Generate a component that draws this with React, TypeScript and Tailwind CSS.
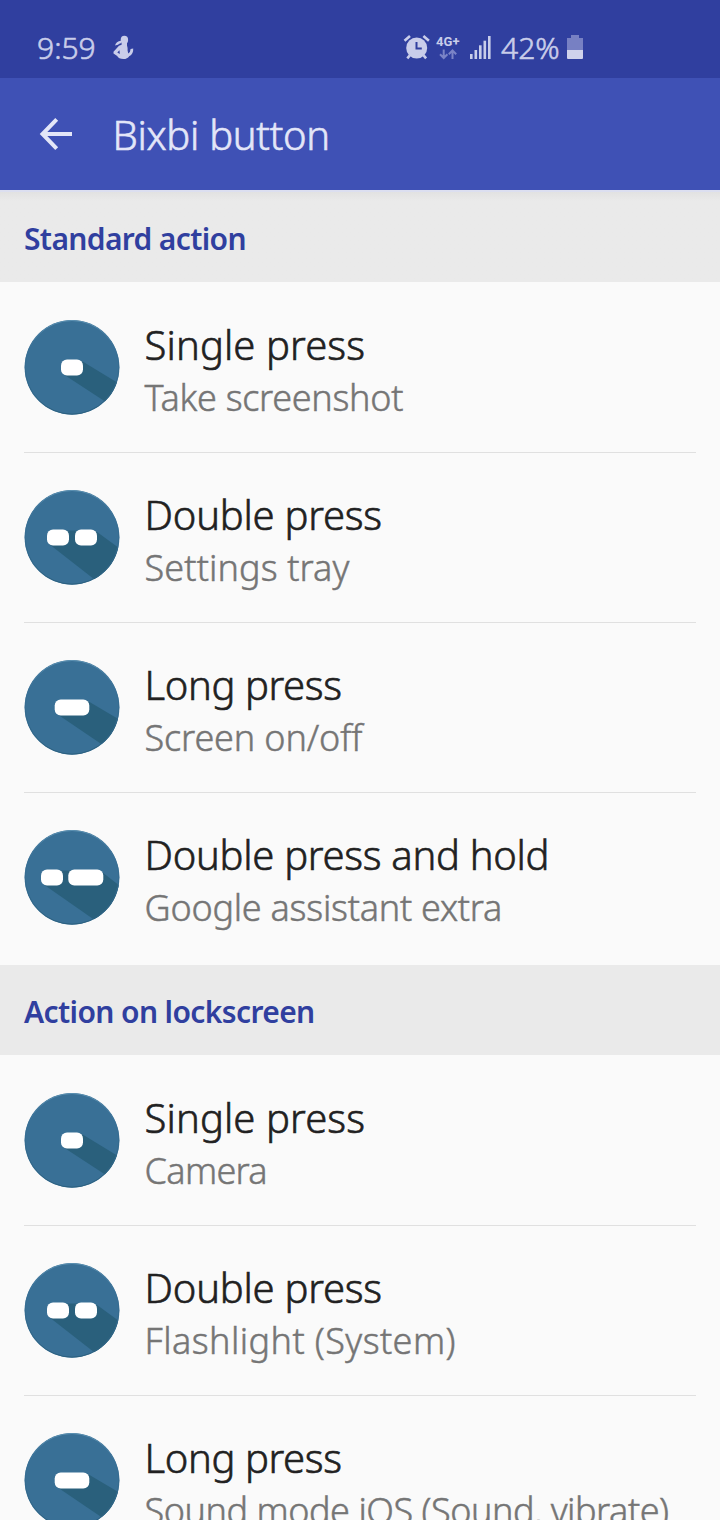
type PressKind = 'single' | 'double' | 'long' | 'doubleHold';

const glyphs: Record<PressKind, { pills: { x: number; w: number }[]; shade: string }> = {
  single: { pills: [{ x: 37, w: 22 }], shade: '39,55 57,41.5 126,83.5 120,108' },
  double: { pills: [{ x: 23, w: 22 }, { x: 51, w: 22 }], shade: '25,55 31,41.5 71,41.5 114.4,73 107,119' },
  long: { pills: [{ x: 30.7, w: 34.6 }], shade: '33,55 63,41.5 122.4,76.6 115.6,111' },
  doubleHold: { pills: [{ x: 17, w: 22 }, { x: 44.3, w: 35 }], shade: '19,55 35,41.5 76,41.5 109,67 116.4,123' },
};

type Entry = { kind: PressKind; title: string; titleClass: string; detail: string; detailClass: string };

const standard: Entry[] = [
  { kind: 'single', title: 'Single press', titleClass: 'tracking-[0.1px]', detail: 'Take screenshot', detailClass: 'tracking-[-0.3px]' },
  { kind: 'double', title: 'Double press', titleClass: 'tracking-[-0.25px]', detail: 'Settings tray', detailClass: 'tracking-[0.1px]' },
  { kind: 'long', title: 'Long press', titleClass: 'tracking-[-0.4px]', detail: 'Screen on/off', detailClass: 'tracking-[-0.15px]' },
  { kind: 'doubleHold', title: 'Double press and hold', titleClass: 'tracking-[-0.3px]', detail: 'Google assistant extra', detailClass: 'tracking-[-0.25px]' },
];

const lockscreen: Entry[] = [
  { kind: 'single', title: 'Single press', titleClass: 'tracking-[0.1px]', detail: 'Camera', detailClass: 'tracking-[-0.7px]' },
  { kind: 'double', title: 'Double press', titleClass: 'tracking-[-0.25px]', detail: 'Flashlight (System)', detailClass: 'tracking-[0.42px]' },
  { kind: 'long', title: 'Long press', titleClass: 'tracking-[-0.4px]', detail: 'Sound mode iOS (Sound, vibrate)', detailClass: 'tracking-[-0.47px]' },
];

function PressIcon({ kind }: { kind: PressKind }) {
  const { pills, shade } = glyphs[kind];
  return (
    <svg viewBox="0 0 96 96" className="size-24 shrink-0">
      <defs>
        <clipPath id={'disc-' + kind}>
          <circle cx="48" cy="48.3" r="47.4" />
        </clipPath>
        <linearGradient id={'rim-' + kind} x1="0" y1="0" x2="0" y2="1">
          <stop offset="0" stopColor="#5c91b2" />
          <stop offset="0.3" stopColor="#397096" />
          <stop offset="1" stopColor="#2b607f" />
        </linearGradient>
      </defs>
      <g clipPath={`url(#disc-${kind})`}>
        <rect width="96" height="96" fill="#397096" />
        <polygon points={shade} fill="#2a607c" />
      </g>
      <circle cx="48" cy="48.3" r="46.8" fill="none" stroke={`url(#rim-${kind})`} strokeWidth="1" />
      {pills.map((p) => (
        <rect key={p.x} x={p.x} y="40.4" width={p.w} height="16" rx="6" fill="#fff" />
      ))}
    </svg>
  );
}

type SectionProps = { name: string; headClass: string; entries: Entry[] };

function Section({ name, headClass, entries }: SectionProps) {
  return (
    <section className="shrink-0 pb-[3px]">
      <h2 className={'h-[90px] px-6 text-[30px] leading-[94px] font-semibold text-[#303f9f] ' + headClass}>{name}</h2>
      <ul>
        {entries.map((e, i) => (
          <li key={e.title} className="flex h-[170px] flex-col px-6">
            <div className="flex flex-1 items-start">
              <div className="pt-[37px]">
                <PressIcon kind={e.kind} />
              </div>
              <div className="pt-9 pl-[24.6px] whitespace-nowrap [font-variant-ligatures:none]">
                <div className={'text-[40px] leading-[54px] text-[#212121] [-webkit-text-stroke:0.6px] ' + e.titleClass}>
                  {e.title}
                </div>
                <div className={'text-[36px] leading-[51px] text-[#757575] [-webkit-text-stroke:0.5px] ' + e.detailClass}>
                  {e.detail}
                </div>
              </div>
            </div>
            {i < entries.length - 1 && <div className="-mb-px h-px shrink-0 bg-[#e0e0e0]" />}
          </li>
        ))}
      </ul>
    </section>
  );
}

function StatusBar() {
  return (
    <div className="flex h-[78px] shrink-0 items-start bg-[#303f9f] pt-[31px] text-[30px] leading-[34px] text-[#c9cdea]">
      <span className="ml-[37px] w-[75px] [-webkit-text-stroke:0.6px]">9:59</span>
      <svg viewBox="0 0 24 26" className="mt-1 h-[26px] w-6 shrink-0" fill="#c9cdea">
        <ellipse cx="12.4" cy="4.9" rx="3.7" ry="4.1" />
        <path d="M3 10.4q1-3.8 6-4.6l.4 2.2q-2.4.4-3.4 1.8z" />
        <path d="M9.6 7.500h5.400v3q1 3 .6 5l.6 3q2.200-1 2.400-4.600l2.600-.4q.4 5.500-4 7.700-1.800 2.800-5.700 2.800-5 0-6.300-3l-3.700-2.600V16.800l5.500-6 2.600-1z" />
        <path d="M7.500 15.200l-2.200 2.300 2.500 1.600z" fill="#303f9f" />
      </svg>
      <svg viewBox="0 0 27 27" className="mt-[3px] ml-[267px] size-[27px] shrink-0" fill="none" stroke="#c9cdea" strokeWidth="2.6">
        <circle cx="13.7" cy="14" r="10.500" fill="#c9cdea" stroke="none" />
        <path d="M1.500 6.800L7 2M20.400 2l5.500 4.800M6.800 21.300l-2.500 3M20.600 21.300l2.500 3" />
        <path d="M13.500 8v6.500h5.300" stroke="#303f9f" strokeWidth="2" />
      </svg>
      <div className="ml-[6px] flex w-[23px] shrink-0 flex-col pt-1">
        <span className="font-['Roboto',sans-serif] text-[13px] leading-[14px] font-bold tracking-[0.1px]">4G+</span>
        <svg viewBox="0 0 24 11" className="-ml-px h-[11px] w-6" fill="none" stroke="#7b84c6" strokeWidth="2">
          <path d="M8.7 0.500v8M5 5.300l3.700 3.700 3.700-3.700M17.500 10V2M13.800 5.200l3.700-3.700 3.700 3.700" />
        </svg>
      </div>
      <svg viewBox="0 0 22 24" className="mt-1 ml-[11px] h-6 w-[22px] shrink-0" fill="#c9cdea">
        <rect x="0" y="19" width="2.600" height="5" />
        <rect x="4.500" y="15" width="2.600" height="9" />
        <rect x="9" y="10.300" width="2.600" height="13.700" />
        <rect x="13.500" y="5.700" width="2.600" height="18.300" />
        <rect x="18" y="1" width="2.600" height="23" />
      </svg>
      <span className="ml-[9px] w-[66px] [-webkit-text-stroke:0.6px]">42%</span>
      <svg viewBox="0 0 16 24" className="mt-1 h-6 w-4 shrink-0">
        <path d="M4 0h8v3h4v12H0V3h4z" fill="#7780c3" />
        <path d="M0 15h16v8q0 1-1 1H1q-1 0-1-1z" fill="#cfd2ec" />
      </svg>
    </div>
  );
}

export default function App() {
  return (
    <div className="flex h-[1520px] w-[720px] flex-col overflow-hidden bg-[#fafafa] font-['Noto_Sans',sans-serif] font-light">
      <StatusBar />
      <header className="flex h-28 shrink-0 items-center bg-[#3f51b5]">
        <svg viewBox="0 0 34 34" className="ml-[39px] size-[34px]" fill="none" stroke="#e3e6f8" strokeWidth="4">
          <path d="M33 17H4M17.700 2.300L3.500 17l14.200 14.700" />
        </svg>
        <h1 className="ml-[39.5px] pt-0.5 text-[40px] tracking-[-0.3px] text-[#e3e6f8] [-webkit-text-stroke:0.6px]">
          Bixbi button
        </h1>
      </header>
      <div className="h-0.5 shrink-0 bg-[#dcdff0]" />
      <Section
        name="Standard action"
        headClass="tracking-[-0.65px] bg-linear-to-b from-[#e2e2e2] to-[#eaeaea] to-[9px]"
        entries={standard}
      />
      <Section name="Action on lockscreen" headClass="tracking-[-0.62px] bg-[#eaeaea]" entries={lockscreen} />
    </div>
  );
}
